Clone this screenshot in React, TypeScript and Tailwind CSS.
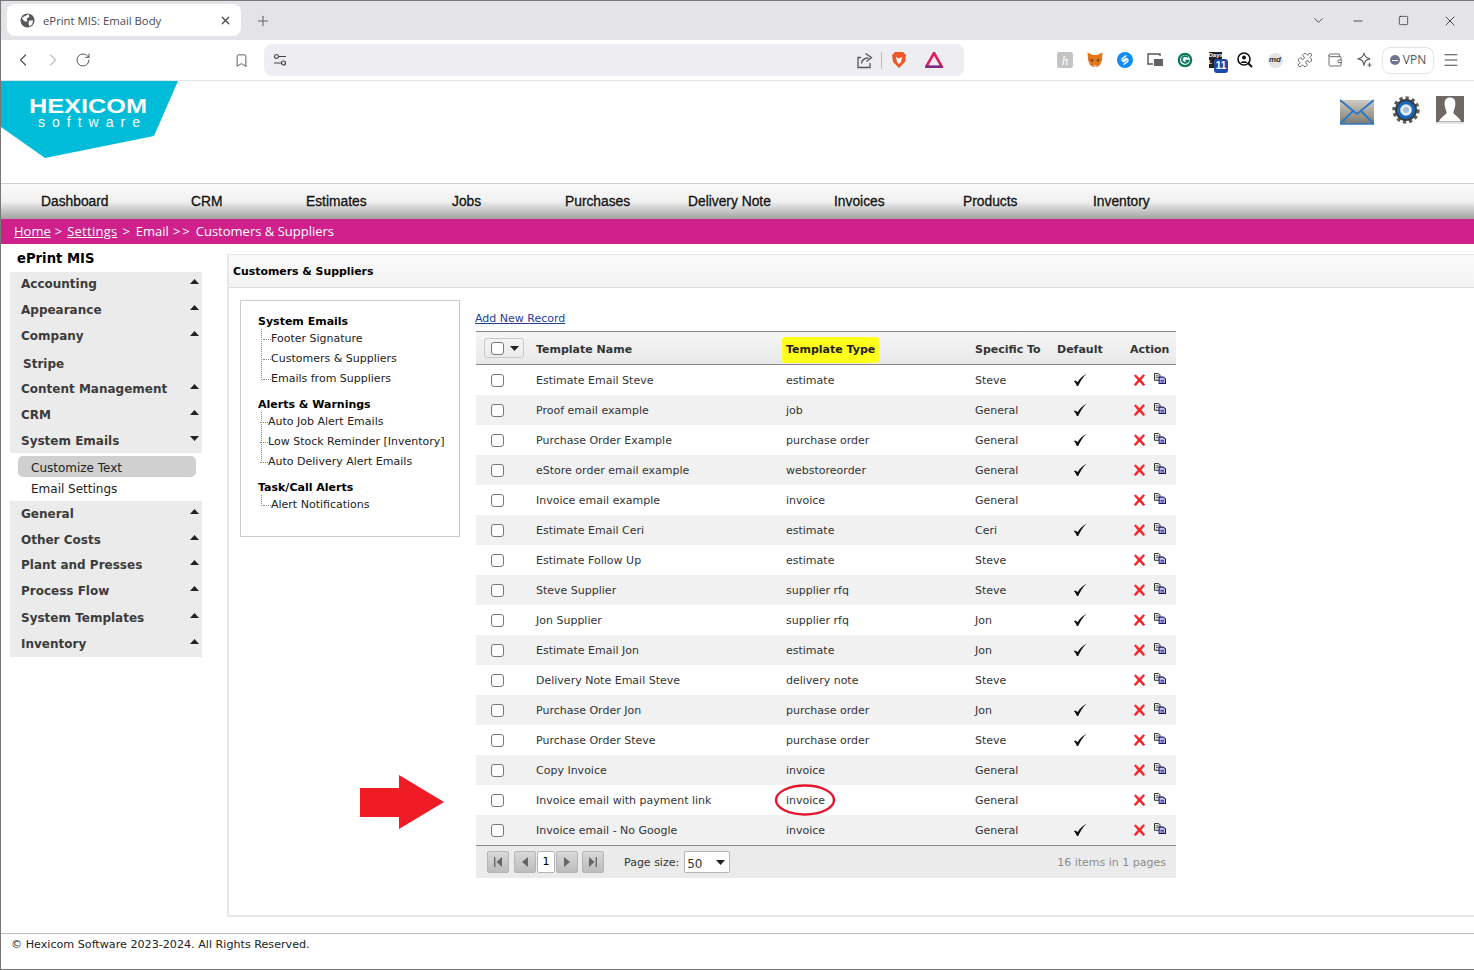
import { Bookmark, ChevronDown, ChevronLeft, ChevronRight, Menu, Minus, Plus, RotateCw, Square, Wallet, X, Puzzle } from "lucide-react";

const navItems = [
  { label: "Dashboard", width: "w-[150px]" },
  { label: "CRM", width: "w-[115px]" },
  { label: "Estimates", width: "w-[146px]" },
  { label: "Jobs", width: "w-[113px]" },
  { label: "Purchases", width: "w-[123px]" },
  { label: "Delivery Note", width: "w-[146px]" },
  { label: "Invoices", width: "w-[129px]" },
  { label: "Products", width: "w-[130px]" },
  { label: "Inventory", width: "w-[120px]" },
];

const sideTop = [
  { label: "Accounting", h: "h-[24px]", arrow: true },
  { label: "Appearance", h: "h-[26px] pt-[1px]", arrow: true },
  { label: "Company", h: "h-[27px]", arrow: true },
  { label: "Stripe", h: "h-[27px] pt-[2px]", arrow: false, pad: "pl-[13px]" },
  { label: "Content Management", h: "h-[25px]", arrow: true },
  { label: "CRM", h: "h-[26px] pt-[1px]", arrow: true },
  { label: "System Emails", h: "h-[26px] pt-[1px]", arrow: true, open: true },
];

const sideBottom = [
  { label: "General", h: "h-[25px]" },
  { label: "Other Costs", h: "h-[26px] pt-[1px]" },
  { label: "Plant and Presses", h: "h-[25px]" },
  { label: "Process Flow", h: "h-[26px] pt-[1px]" },
  { label: "System Templates", h: "h-[27px] pt-[2px]" },
  { label: "Inventory", h: "h-[27px]" },
];

const rows = [
  ["Estimate Email Steve", "estimate", "Steve", true],
  ["Proof email example", "job", "General", true],
  ["Purchase Order Example", "purchase order", "General", true],
  ["eStore order email example", "webstoreorder", "General", true],
  ["Invoice email example", "invoice", "General", false],
  ["Estimate Email Ceri", "estimate", "Ceri", true],
  ["Estimate Follow Up", "estimate", "Steve", false],
  ["Steve Supplier", "supplier rfq", "Steve", true],
  ["Jon Supplier", "supplier rfq", "Jon", true],
  ["Estimate Email Jon", "estimate", "Jon", true],
  ["Delivery Note Email Steve", "delivery note", "Steve", false],
  ["Purchase Order Jon", "purchase order", "Jon", true],
  ["Purchase Order Steve", "purchase order", "Steve", true],
  ["Copy Invoice", "invoice", "General", false],
  ["Invoice email with payment link", "invoice", "General", false],
  ["Invoice email - No Google", "invoice", "General", true],
] as const;

const tree = [
  { title: "System Emails", indent: "pl-[14px]", pt: "pt-[13px]", items: ["Footer Signature", "Customers & Suppliers", "Emails from Suppliers"] },
  { title: "Alerts & Warnings", indent: "pl-[11px]", pt: "pt-[8px]", items: ["Auto Job Alert Emails", "Low Stock Reminder [Inventory]", "Auto Delivery Alert Emails"] },
  { title: "Task/Call Alerts", indent: "pl-[14px]", pt: "pt-[8px]", items: ["Alert Notifications"] },
];

const gridCols = "grid grid-cols-[60px_250px_189px_82px_73px_46px] items-center";

function Triangle({ down }: { down?: boolean }) {
  return (
    <svg width="9" height="5" viewBox="0 0 9 5" className="shrink-0">
      <polygon points={down ? "0,0 9,0 4.5,5" : "4.5,0 9,5 0,5"} fill="#222" />
    </svg>
  );
}

function Check() {
  return (
    <svg width="14" height="14" viewBox="0 0 14 14">
      <path d="M.8 8 C2.4 7.4 3.6 8 4.6 9.2 C6.6 5.8 9.4 3 13.6 .8 C10 4 7.4 8 5.2 13 L3.8 13 C3.2 11 2.2 9.4 .8 8 Z" fill="#0c0c0c" />
    </svg>
  );
}

function DeleteIcon() {
  return (
    <svg width="13" height="14" viewBox="0 0 14 14" className="block">
      <path d="M1 2.5 L3 1 L7 5 L11 .8 L13 2 L9 7 L13.3 12 L11 13.4 L7 9 L3 13.4 L.8 12 L5 7 Z" fill="#f0292c" />
      <path d="M3 1 L7 5 L11 .8" fill="none" stroke="#ff8a8a" strokeWidth="0.7" />
    </svg>
  );
}

function CopyIcon() {
  return (
    <svg width="12" height="11" viewBox="0 0 13 12" className="block">
      <path d="M.5 .5 H5 L6.5 2 V8 H.5 Z" fill="#e4e4e4" stroke="#222" strokeWidth="1" />
      <path d="M2 3 H5 M2 5 H5" stroke="#333" strokeWidth="0.8" />
      <path d="M5.5 4.5 H10 L12.5 6.5 V11.5 H5.5 Z" fill="#c8c8f0" stroke="#14146e" strokeWidth="1.1" />
      <path d="M7 8 H11 M7 9.8 H11" stroke="#14146e" strokeWidth="0.9" />
    </svg>
  );
}

function RowCheckbox() {
  return <div className="w-[13px] h-[13px] bg-white border border-[#767676] rounded-[3px]" />;
}

function PagerButton({ kind }: { kind: "first" | "prev" | "next" | "last" }) {
  return (
    <div className="w-[22px] h-[22px] flex items-center justify-center rounded-[2px] border border-[#b5b5b5] bg-gradient-to-b from-[#d8d8d8] to-[#bcbcbc]">
      <svg width="10" height="12" viewBox="0 0 10 12">
        {kind === "first" && <path d="M1 1 H2.4 V11 H1 Z M9 1 V11 L3.5 6 Z" fill="#666" />}
        {kind === "prev" && <path d="M8 1 V11 L2 6 Z" fill="#666" />}
        {kind === "next" && <path d="M2 1 V11 L8 6 Z" fill="#666" />}
        {kind === "last" && <path d="M9 1 H7.6 V11 H9 Z M1 1 V11 L6.5 6 Z" fill="#666" />}
      </svg>
    </div>
  );
}

function ExtIcon({ children }: { children: React.ReactNode }) {
  return <div className="w-[30px] h-[24px] flex items-center justify-center relative">{children}</div>;
}

function Extensions() {
  return (
    <div className="flex items-center">
      <ExtIcon>
        <div className="w-[16px] h-[16px] rounded-[2px] bg-[#c4c4c4] flex items-center justify-center text-white text-[13px] leading-none font-['Liberation_Serif',serif] italic">h</div>
      </ExtIcon>
      <ExtIcon>
        <svg width="16" height="16" viewBox="0 0 16 16">
          <polygon points="0.5,0.5 6,3 10,3 15.5,0.5 15,8 13,13 10,15 6,15 3,13 1,8" fill="#e2761b" />
          <polygon points="3,7 6.5,8 5,10" fill="#5b3410" />
          <polygon points="13,7 9.5,8 11,10" fill="#5b3410" />
          <polygon points="6,13 10,13 9,15 7,15" fill="#d7c1b3" />
        </svg>
      </ExtIcon>
      <ExtIcon>
        <svg width="16" height="16" viewBox="0 0 16 16">
          <circle cx="8" cy="8" r="8" fill="#0f8cf5" />
          <path d="M9 3.8 L5.4 6.4 A1.9 1.9 0 0 0 7.8 9.2 L9.2 8 M7 12.2 L10.6 9.6 A1.9 1.9 0 0 0 8.2 6.8 L6.8 8" fill="none" stroke="#fff" strokeWidth="1.4" strokeLinecap="round" />
        </svg>
      </ExtIcon>
      <ExtIcon>
        <svg width="16" height="14" viewBox="0 0 16 14">
          <path d="M13 3 V1 H1 V11 H6" fill="none" stroke="#555" strokeWidth="1.4" />
          <rect x="7" y="6" width="9" height="7" fill="#5f6368" />
        </svg>
      </ExtIcon>
      <ExtIcon>
        <svg width="16" height="16" viewBox="0 0 16 16">
          <circle cx="8" cy="8" r="7.3" fill="#0c7a5d" />
          <circle cx="8" cy="8" r="5" fill="#fff" />
          <path d="M11 5.5 A3.4 3.4 0 1 0 11.4 8.6 H8.4" fill="none" stroke="#0c7a5d" strokeWidth="1.7" />
        </svg>
      </ExtIcon>
      <ExtIcon>
        <div className="w-[13px] h-[16px] bg-[#222] text-white text-[6px] leading-[7px] font-bold overflow-hidden font-['Liberation_Sans',sans-serif]">Days L</div>
        <div className="absolute left-[14px] top-[11px] w-[14px] h-[14px] rounded-[3px] bg-[#1f4aa5] text-white text-[10px] leading-[14px] font-bold text-center font-['Liberation_Sans',sans-serif]">11</div>
      </ExtIcon>
      <ExtIcon>
        <svg width="16" height="16" viewBox="0 0 16 16">
          <circle cx="7" cy="7" r="6" fill="#fff" stroke="#111" strokeWidth="1.6" />
          <circle cx="7" cy="5.5" r="2" fill="#111" />
          <path d="M3.5 11 C4 8.5 10 8.5 10.5 11 Z" fill="#111" />
          <path d="M11 11 L15 15" stroke="#111" strokeWidth="2" />
        </svg>
      </ExtIcon>
      <ExtIcon>
        <div className="w-[15px] h-[15px] rounded-full bg-[#e4e4e4] flex items-center justify-center text-[8px] leading-none italic font-bold text-[#333] font-['Liberation_Sans',sans-serif]">md</div>
      </ExtIcon>
      <ExtIcon>
        <Puzzle size={16} strokeWidth={1.4} className="text-[#5f6368]" />
      </ExtIcon>
      <ExtIcon>
        <Wallet size={16} strokeWidth={1.4} className="text-[#5f6368]" />
      </ExtIcon>
      <ExtIcon>
        <svg width="16" height="16" viewBox="0 0 16 16">
          <path d="M7 1 C7.6 4.6 9 6 13 6.8 C9 7.6 7.6 9 7 13.5 C6.4 9 5 7.6 1 6.8 C5 6 6.4 4.6 7 1 Z" fill="none" stroke="#5f6368" strokeWidth="1.2" strokeLinejoin="round" />
          <path d="M12.5 11 V15 M10.5 13 H14.5" stroke="#5f6368" strokeWidth="1.2" />
        </svg>
      </ExtIcon>
    </div>
  );
}

function BrowserChrome() {
  return (
    <div className="font-['Open_Sans',sans-serif] text-[#4a4a4f]">
      <div className="h-[40px] bg-[#e3e3e8] border-t border-[#777] flex items-center pr-[5px] pl-[6px]">
        <div className="w-[234px] h-[32px] mt-[-1px] bg-white rounded-[8px] flex items-center pl-[13px] pr-[9px]">
          <svg width="15" height="15" viewBox="0 0 16 16" className="shrink-0">
            <circle cx="8" cy="8" r="7.5" fill="#55585c" />
            <path d="M2 5 L6 3 L9 1 L10 4 L7 6 L8 9 L5 9 L3 7 Z M10 8 L14 8 L13 12 L10 14.5 L9 11 Z" fill="#fff" />
          </svg>
          <span className="ml-[8px] pt-[2px] text-[11.3px] flex-1">ePrint MIS: Email Body</span>
          <X size={13} strokeWidth={2.4} className="text-[#444]" />
        </div>
        <Plus size={16} strokeWidth={1.6} className="ml-[14px] text-[#666]" />
        <div className="flex-1" />
        <ChevronDown size={15} strokeWidth={1.6} className="text-[#555] mr-[25px]" />
        <Minus size={14} strokeWidth={1.3} className="text-[#222] mr-[33px]" />
        <Square size={11} strokeWidth={1.5} className="text-[#222] mr-[33px]" />
        <X size={16} strokeWidth={1.2} className="text-[#222] mr-[11px]" />
      </div>
      <div className="h-[41px] bg-white border-b border-[#e3e3e8] flex items-center pl-[12px] pr-[11px]">
        <ChevronLeft size={20} strokeWidth={1.5} className="text-[#555]" />
        <ChevronRight size={20} strokeWidth={1.5} className="ml-[10px] text-[#c2c2c2]" />
        <RotateCw size={16} strokeWidth={1.5} className="ml-[12px] text-[#555]" />
        <Bookmark size={15} strokeWidth={1.5} className="ml-[143px] text-[#555]" />
        <div className="ml-[15px] w-[700px] h-[32px] bg-[#eeeef2] rounded-[8px] flex items-center pl-[9px] pr-[21px]">
          <svg width="14" height="14" viewBox="0 0 14 14" className="shrink-0">
            <circle cx="3.5" cy="3.5" r="2" fill="none" stroke="#444" strokeWidth="1.2" />
            <circle cx="10.5" cy="10" r="2" fill="none" stroke="#444" strokeWidth="1.2" />
            <path d="M6 3.5 H13 M1 10 H8" stroke="#444" strokeWidth="1.2" />
          </svg>
          <div className="flex-1" />
          <svg width="17" height="17" viewBox="0 0 17 17" className="mr-[-1px]">
            <path d="M5 5.5 H2 V15.5 H14 V11 M5.5 11.5 C6 7.5 8.5 6 12.5 6 M9.5 1.5 L15.5 5.5 L10.5 9.5" fill="none" stroke="#555" strokeWidth="1.3" />
          </svg>
          <div className="w-px h-[17px] bg-[#bbb] mx-[9px]" />
          <svg width="16" height="18" viewBox="0 0 16 18" className="mr-[18px]">
            <path d="M4 1 H12 L15 4 L14 11 L8 17 L2 11 L1 4 Z" fill="#f1562b" />
            <path d="M5 6 L8 7.5 L11 6 L10 11 L8 13 L6 11 Z" fill="#fff" />
          </svg>
          <svg width="18" height="16" viewBox="0 0 18 16">
            <polygon points="9,1 17,15 1,15" fill="none" stroke="#e01d5a" strokeWidth="2.6" />
            <path d="M1 14.6 H17" stroke="#6b2d8c" strokeWidth="2.2" />
          </svg>
        </div>
        <div className="ml-[86px]">
          <Extensions />
        </div>
        <div className="ml-[2px] w-[52px] h-[27px] border border-[#e3e3e8] rounded-[8px] flex items-center justify-center gap-[3px] text-[12px] text-[#555]">
          <span className="w-[10px] h-[10px] rounded-full bg-[#6f7390] flex items-center justify-center">
            <span className="w-[6px] h-px bg-white" />
          </span>
          VPN
        </div>
        <Menu size={18} strokeWidth={1.3} className="ml-[8px] text-[#444]" />
      </div>
    </div>
  );
}

function HeaderIcons() {
  return (
    <div className="flex items-start pt-[15px] pr-[10px]">
      <svg width="34" height="27" viewBox="0 0 34 27" className="mt-[2px] mr-[18px]">
        <defs>
          <linearGradient id="mail" x1="0" y1="0" x2="0" y2="1">
            <stop offset="0" stopColor="#cfcbc2" />
            <stop offset="1" stopColor="#7f7a70" />
          </linearGradient>
        </defs>
        <rect x="0" y="2" width="34" height="24" fill="url(#mail)" />
        <path d="M0 2 L17 16 L34 2 M0 26 L13 13 M34 26 L21 13" fill="none" stroke="#2f79c4" strokeWidth="2" />
        <path d="M0 26 H34" stroke="#2f79c4" strokeWidth="1.5" />
      </svg>
      <svg width="28" height="28" viewBox="0 0 28 28" className="mr-[16px]">
        <circle cx="14" cy="14" r="12" fill="none" stroke="#5a5a5a" strokeWidth="3.4" strokeDasharray="3.2 3" />
        <circle cx="14" cy="14" r="11" fill="#3c3c3c" />
        <circle cx="14" cy="14" r="9" fill="#1668bd" />
        <circle cx="14" cy="14" r="5.8" fill="#e6edf3" />
        <circle cx="14" cy="14" r="3" fill="#a9c2d9" />
      </svg>
      <div className="w-[28px] h-[28px] bg-[#6f6864] border-b-2 border-[#e3e3e3] overflow-hidden">
        <svg width="28" height="26" viewBox="0 0 29 26">
          <path d="M14.5 1 C10 1 8.5 4.5 9 9 C9.5 13 11 15 11 17 C11 19 6 20 3 26 H26 C23 20 18 19 18 17 C18 15 19.5 13 20 9 C20.5 4.5 19 1 14.5 1 Z" fill="#fff" />
        </svg>
      </div>
    </div>
  );
}

function Logo() {
  return (
    <svg width="178" height="78" viewBox="0 0 178 78" className="shrink-0">
      <polygon points="0,0 177,0 153,55 44,77 0,46" fill="#00bcd9" />
      <text x="28" y="32" fontFamily="Liberation Sans, sans-serif" fontWeight="700" fontSize="20" fill="#fff" textLength="118" lengthAdjust="spacingAndGlyphs">HEXICOM</text>
      <text x="37" y="46" fontFamily="Liberation Sans, sans-serif" fontSize="14" fill="#fff" textLength="102">software</text>
    </svg>
  );
}

function Sidebar() {
  return (
    <div className="w-[226px] shrink-0 pl-[9px] font-['DejaVu_Sans',sans-serif]">
      <div className="h-[28px] pl-[7px] pt-[2px] flex items-center text-[13.2px] font-bold text-black">ePrint MIS</div>
      <div className="w-[192px] bg-[#ebebeb] text-[12px] font-bold text-[#3b3b3b]">
        {sideTop.map((item) => (
          <div key={item.label} className={`${item.h} ${item.pad ?? "pl-[11px]"} pr-[3px] flex items-center justify-between`}>
            <span>{item.label}</span>
            {item.arrow && (
              <span className="mb-[5px]">
                <Triangle down={item.open} />
              </span>
            )}
          </div>
        ))}
      </div>
      <div className="w-[192px] h-[48px] pt-[3px] text-[12px] text-[#222]">
        <div className="ml-[8px] w-[178px] h-[21px] pt-[2px] rounded-[5px] bg-[#d0d0d0] pl-[13px] flex items-center">Customize Text</div>
        <div className="ml-[21px] h-[21px] pt-[2px] flex items-center">Email Settings</div>
      </div>
      <div className="w-[192px] bg-[#ebebeb] text-[12px] font-bold text-[#3b3b3b]">
        {sideBottom.map((item) => (
          <div key={item.label} className={`${item.h} pl-[11px] pr-[3px] flex items-center justify-between`}>
            <span>{item.label}</span>
            <span className="mb-[5px]">
              <Triangle />
            </span>
          </div>
        ))}
      </div>
    </div>
  );
}

function TreeBox() {
  return (
    <div className="w-[220px] h-[237px] shrink-0 border border-[#cccccc] pl-[17px] text-[11px] text-[#222]">
      {tree.map((group) => (
        <div key={group.title} className={group.pt}>
          <div className="h-[15px] pt-[2px] flex items-center text-[11px] font-bold text-black">{group.title}</div>
          <div className={`${group.indent} ml-[-1px] relative`}>
            <div className="absolute left-[4px] top-0 bottom-[9px] border-l border-dotted border-[#888]" />
            {group.items.map((item) => (
              <div key={item} className="h-[20px] flex items-center relative">
                <span className="absolute left-[-8px] w-[8px] border-t border-dotted border-[#888]" />
                {item}
              </div>
            ))}
          </div>
        </div>
      ))}
    </div>
  );
}

function EmailTable() {
  return (
    <div className="w-[700px] shrink-0 text-[11px] text-[#333]">
      <div className="h-[31px] flex items-end pb-[4px] ml-[-1px]">
        <a className="text-[#23408f] underline">Add New Record</a>
      </div>
      <div className={`${gridCols} h-[34px] border-y border-[#8a8a8a] bg-gradient-to-b from-[#f6f6f6] to-[#e8e8e8] font-bold text-[#333]`}>
        <div className="pl-[8px]">
          <div className="w-[40px] h-[20px] rounded-[3px] border border-[#c8c8c8] flex items-center pl-[6px] gap-[6px]">
            <RowCheckbox />
            <Triangle down />
          </div>
        </div>
        <div className="pt-[4px]">Template Name</div>
        <div className="pt-[4px]">
          <span className="inline-block ml-[-4px] px-[4px] py-[5px] rounded-[3px] bg-[#ffff19] text-[#222]">Template Type</span>
        </div>
        <div className="pt-[4px]">Specific To</div>
        <div className="pt-[4px]">Default</div>
        <div className="pt-[4px]">Action</div>
      </div>
      {rows.map(([name, type, specific, isDefault], i) => (
        <div key={name} className={`${gridCols} h-[30px] ${i % 2 === 1 ? "bg-[#f1f1f1]" : "bg-white"}`}>
          <div className="pl-[15px]">
            <RowCheckbox />
          </div>
          <div className="pt-[2px]">{name}</div>
          <div className="pt-[2px]">
            <span className="relative">
              {type}
              {name === "Invoice email with payment link" && (
                <svg width="62" height="32" viewBox="0 0 62 32" className="absolute left-[-12px] top-[-10px]">
                  <ellipse cx="31" cy="16" rx="29" ry="14.5" fill="none" stroke="#e4162d" strokeWidth="2.4" />
                </svg>
              )}
            </span>
          </div>
          <div className="pt-[2px]">{specific}</div>
          <div className="pl-[16px] flex items-center">{isDefault && <Check />}</div>
          <div className="pl-[3px] flex items-start gap-[8px]">
            <DeleteIcon />
            <CopyIcon />
          </div>
        </div>
      ))}
      <div className="h-[33px] border-t border-[#8a8a8a] bg-[#ebebeb] flex items-center pl-[11px] pr-[10px]">
        <PagerButton kind="first" />
        <div className="w-[5px]" />
        <PagerButton kind="prev" />
        <div className="mx-px w-[18px] h-[22px] bg-white border border-[#b5b5b5] rounded-[2px] flex items-center justify-center text-black">1</div>
        <PagerButton kind="next" />
        <div className="w-[4px]" />
        <PagerButton kind="last" />
        <span className="ml-[20px] pt-[2px]">Page size:</span>
        <div className="ml-[5px] w-[46px] h-[22px] bg-white border border-[#b5b5b5] rounded-[2px] flex items-center justify-between pl-[2px] pr-[4px]">
          <span className="text-[12px] pt-[3px]">50</span>
          <Triangle down />
        </div>
        <span className="ml-auto pt-[2px] text-[#8a8a8a]">16 items in 1 pages</span>
      </div>
    </div>
  );
}

export default function App() {
  return (
    <div className="w-[1474px] h-[970px] overflow-hidden bg-white border-l border-[#777] flex flex-col relative">
      <BrowserChrome />

      <div className="h-[103px] flex items-start justify-between border-b border-[#cfcfcf] shrink-0">
        <Logo />
        <HeaderIcons />
      </div>

      <div className="h-[35px] shrink-0 flex items-center pl-[40px] pt-[2px] bg-gradient-to-b from-[#fbfbfb] via-[#f0f0f0] to-[#a2a2a2] text-[13.8px] text-[#111] font-['Liberation_Sans',sans-serif] [-webkit-text-stroke:0.3px_#111]">
        {navItems.map((item) => (
          <div key={item.label} className={item.width}>
            {item.label}
          </div>
        ))}
      </div>

      <div className="h-[25px] shrink-0 bg-[#cf208c] text-white text-[13px] pl-[13px] flex items-center font-['Open_Sans',sans-serif]">
        <a className="underline">Home</a>
        <span className="ml-[4px]">&gt;</span>
        <a className="underline ml-[5px] tracking-[0.25px]">Settings</a>
        <span className="ml-[5px]">&gt;</span>
        <span className="ml-[6px]">Email</span>
        <span className="ml-[4px] tracking-[2px]">&gt;&gt;</span>
        <span className="ml-[4px]">Customers &amp; Suppliers</span>
      </div>

      <div className="flex flex-1 min-h-0">
        <Sidebar />

        <div className="flex-1 flex flex-col font-['DejaVu_Sans',sans-serif]">
          <div className="mt-[10px] h-[663px] border-l-2 border-t border-b-2 border-[#e8e8e8] flex flex-col">
            <div className="h-[33px] pt-[3px] border-b border-[#dedede] bg-gradient-to-b from-[#fbfbfb] to-[#f3f3f3] pl-[4px] flex items-center text-[10.9px] font-bold text-black">
              Customers &amp; Suppliers
            </div>
            <div className="flex pl-[11px] pt-[12px] gap-[16px]">
              <TreeBox />
              <EmailTable />
            </div>
          </div>
          <div className="mt-[16px] flex-1 ml-[-226px] border-t border-[#bbb] border-b border-b-[#777] pl-[10px] pt-[3px] text-[11.15px] text-[#222]">
            © Hexicom Software 2023-2024. All Rights Reserved.
          </div>
        </div>
      </div>

      <svg width="84" height="54" viewBox="0 0 84 54" className="absolute left-[359px] top-[775px]">
        <polygon points="0,13 39,13 39,0 84,27 39,54 39,42 0,42" fill="#ef1c25" />
      </svg>
    </div>
  );
}
